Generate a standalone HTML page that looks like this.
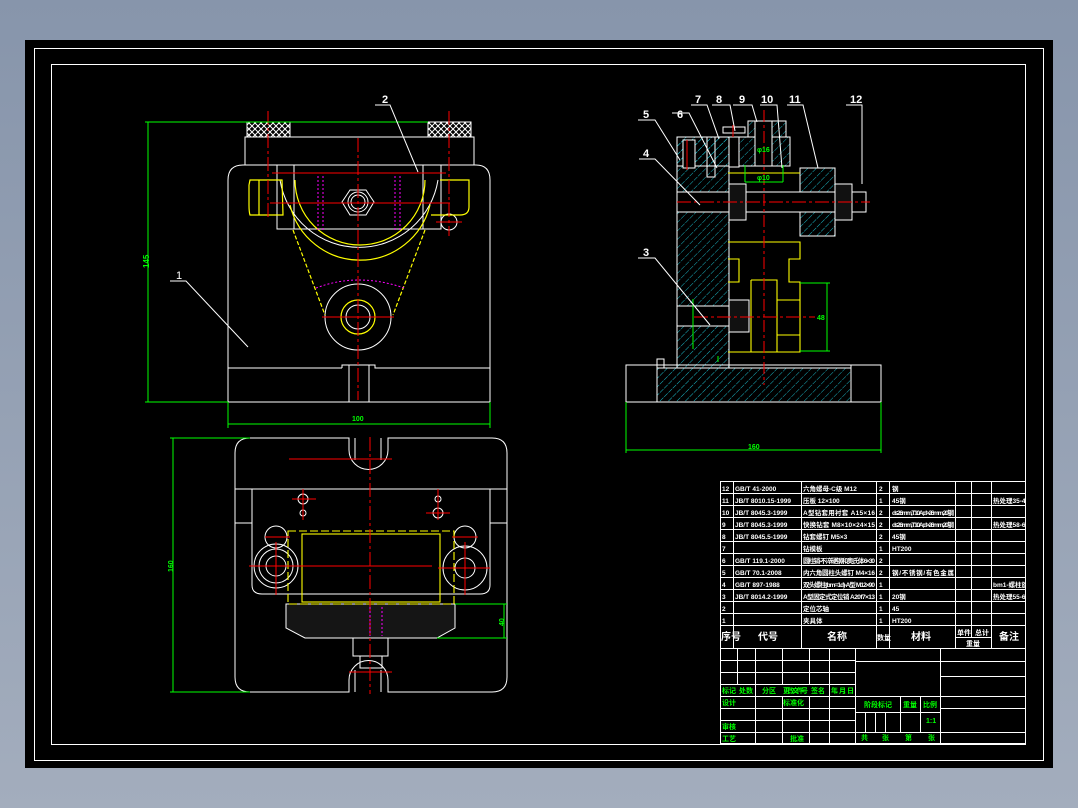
<!DOCTYPE html>
<html><head><meta charset="utf-8"><style>
html,body{margin:0;padding:0;}
body{width:1078px;height:808px;overflow:hidden;background:linear-gradient(180deg,#8795ab 0%,#a3adbd 100%);}
svg{position:absolute;left:0;top:0;}
text{font-family:"Liberation Sans","Noto Sans CJK SC",sans-serif;}
</style></head><body>
<svg width="1078" height="808" viewBox="0 0 1078 808" xmlns="http://www.w3.org/2000/svg">
<defs>
<pattern id="h" width="6" height="6" patternUnits="userSpaceOnUse" patternTransform="rotate(45)">
<line x1="0" y1="0" x2="0" y2="6" stroke="#1ec8d8" stroke-width="0.9" stroke-dasharray="3,1"/>
</pattern>
<pattern id="k" width="6" height="6" patternUnits="userSpaceOnUse">
<path d="M0 0 L6 6 M6 0 L0 6" stroke="#fff" stroke-width="1"/>
</pattern>
<clipPath id="tc"><rect x="720" y="481" width="305" height="145"/></clipPath>
</defs>
<rect x="25" y="40" width="1028" height="728" fill="#000"/>
<g fill="none" stroke="#fff" stroke-width="1">
<rect x="34.5" y="48.5" width="1009" height="712"/>
<rect x="51.5" y="64.5" width="974" height="680"/>
</g>

<!-- FRONT VIEW -->
<g fill="none" stroke="#fff" stroke-width="1">
<path d="M228 402 V180 Q228 165 243 165 H476 Q490 165 490 180 V402 Z"/>
<line x1="228" y1="368" x2="342" y2="368"/><path d="M342 368 V365 H375 V368 H490"/>
<path d="M349 365 V402 M369 365 V402"/>
<rect x="245" y="137" width="229" height="28"/>
<rect x="247" y="122" width="43" height="15" fill="url(#k)"/><rect x="428" y="122" width="43" height="15" fill="url(#k)"/>
<rect x="277" y="165" width="164" height="64"/>
<path d="M294 165 V229 M423 165 V229"/>
<polygon points="350,190 366,190 374,202 366,215 350,215 342,202"/>
<circle cx="358" cy="202" r="10"/><circle cx="358" cy="202" r="7"/>
<circle cx="358" cy="317" r="33"/><circle cx="358" cy="317" r="12"/>
<circle cx="449" cy="222" r="8"/>
<path d="M280 180 A80 80 0 0 0 438 180"/>
</g>
<g fill="none" stroke="#ff0" stroke-width="1.2">
<path d="M250 180 H282 L283 215 H250 Q249 212 249 205 V185 Z M259 180 V215"/>
<path d="M440 180 H469 V207 Q469 215 460 215 H431"/>
<path d="M295 180 A64 64 0 0 0 425 180"/>
<path d="M290 205 A72 72 0 0 0 430 205"/>
<path d="M293 230 L325 315 M425 230 L393 315" stroke-dasharray="4,2"/>
<circle cx="358" cy="317" r="17"/>
</g>
<path d="M316 288 Q358 272 404 288" fill="none" stroke="#f0f" stroke-dasharray="2,2"/>
<path d="M318 176 V230 M323 176 V230 M395 176 V230 M400 176 V230" stroke="#f0f" stroke-dasharray="2,2" fill="none"/>
<g stroke="#f00" stroke-width="1" fill="none">
<path d="M358 138 V400" stroke-dasharray="14,3,3,3"/>
<path d="M268 111 V220 M449 111 V236" stroke-dasharray="14,3,3,3"/>
<path d="M270 203 H450 M272 173 H446 M322 317 H394 M436 222 H462"/>
</g>
<g stroke="#0f0" fill="none">
<path d="M145 122 H428 M145 402 H228 M148 122 V402 M228 402 V428 M490 402 V428 M228 424 H490"/>
</g>
<text x="140" y="265" fill="#0f0" font-size="8" font-weight="bold" transform="rotate(-90 146 262)">145</text>
<text x="352" y="421" fill="#0f0" font-size="7" font-weight="bold">100</text>
<g stroke="#fff" fill="none"><path d="M375 105 H390 L418 172 M170 281 H186 L248 347"/></g>
<text x="382" y="103" fill="#fff" font-size="11" font-weight="bold">2</text>
<text x="176" y="279" fill="#fff" font-size="11">1</text>

<!-- BOTTOM VIEW -->
<g fill="none" stroke="#fff" stroke-width="1">
<path d="M250 438 H349 V450 A10 10 0 0 0 388 450 V438 H492 Q507 438 507 453 V677 Q507 692 492 692 H388 V680 A10 10 0 0 0 349 680 V692 H250 Q235 692 235 677 V453 Q235 438 250 438 Z"/>
<path d="M355 438 V460 M381 438 V460 M355 692 V670 M381 692 V670"/>
<path d="M235 489 H507 M252 489 V523 H235 M490 489 V523 H507"/>
<path d="M252 523 V585 Q252 594 262 594 H480 Q490 594 490 585 V523"/>
<circle cx="276" cy="566" r="22"/><circle cx="276" cy="566" r="17"/><circle cx="276" cy="566" r="10"/>
<circle cx="276" cy="537" r="11"/><circle cx="465" cy="537" r="11"/>
<circle cx="465" cy="568" r="22"/><circle cx="465" cy="568" r="10"/>
<circle cx="303" cy="499" r="5"/><circle cx="303" cy="513" r="3"/>
<circle cx="438" cy="499" r="3"/><circle cx="438" cy="513" r="5"/>
<path d="M286 604 H455 V628 L437 638 H305 L286 628 Z" fill="#151515"/>
<rect x="353" y="638" width="35" height="18"/>
<rect x="360" y="656" width="22" height="12"/>
</g>
<g fill="none" stroke="#ff0" stroke-width="1.1">
<rect x="288" y="531" width="166" height="73" stroke-dasharray="8,3"/>
<rect x="302" y="534" width="138" height="68"/>
</g>
<g stroke="#f00" fill="none">
<path d="M370 437 V694" stroke-dasharray="14,3,3,3"/>
<path d="M250 566 H432 M249 566 H305 M438 568 H490 M276 542 V595 M465 542 V595 M289 459 H392 M349 672 H392 M303 489 V520 M438 489 V520 M292 499 H316 M426 513 H450 M265 537 H290 M452 537 H478"/>
</g>
<path d="M370 607 V636 M382 607 V636" stroke="#f0f" stroke-dasharray="2,2"/>
<g stroke="#0f0" fill="none">
<path d="M170 438 H250 M170 692 H250 M173 438 V692 M455 604 H507 M437 638 H507 M504 604 V638"/>
</g>
<text x="165" y="570" fill="#0f0" font-size="7" font-weight="bold" transform="rotate(-90 170 567)">160</text>
<text x="495" y="625" fill="#0f0" font-size="7" font-weight="bold" transform="rotate(-90 500 621)">40</text>

<!-- SECTION VIEW -->
<g stroke="#fff" fill="url(#h)" stroke-width="1">
<path d="M677 137 H729 V368 H677 Z"/>
<path d="M657 368 H851 V402 H657 Z"/>
<rect x="677" y="137" width="113" height="29"/>
<rect x="748" y="121" width="38" height="16"/>
<rect x="800" y="168" width="35" height="68"/>
</g>
<g stroke="#fff" fill="none">
<path d="M657 368 V359 H664 V368"/>
<rect x="626" y="365" width="255" height="37"/>
<path d="M657 365 V402 M851 365 V402"/>
<rect x="677" y="192" width="189" height="20" fill="#000"/>
<rect x="729" y="184" width="17" height="36" fill="#111"/>
<rect x="835" y="184" width="17" height="36" fill="#111"/>
<rect x="683" y="140" width="12" height="28" fill="#000"/>
<rect x="707" y="137" width="8" height="40"/>
<rect x="729" y="137" width="10" height="30" fill="#000"/>
<rect x="755" y="121" width="17" height="45" fill="#000"/>
<path d="M723 127 H745 V133 H723 Z" fill="#000"/>
<rect x="677" y="306" width="52" height="20" fill="#000"/>
<rect x="729" y="300" width="20" height="32" fill="#111"/>
</g>
<g stroke="#ff0" fill="none" stroke-width="1.1">
<path d="M728 173 H800 M728 242 H800 V259 H789 V282 H800 V352 H728 M728 282 H739 V259 H728"/>
<path d="M751 280 H777 V352 M751 280 V352 M777 300 H800 M777 335 H800"/>
</g>
<g stroke="#f00" fill="none">
<path d="M764 110 V385" stroke-dasharray="12,3,3,3"/>
<path d="M677 202 H870 M694 317 H815" stroke-dasharray="14,3,3,3"/>
<path d="M733 125 V137 M687 140 V170"/>
</g>
<g stroke="#0f0" fill="none">
<path d="M626 402 V453 M881 402 V453 M626 450 H881 M800 283 H830 M800 351 H830 M827 283 V351 M745 165 V182 M783 165 V182 M745 182 H783 M693 299 V349 M718 356 V362"/>
</g>
<text x="748" y="449" fill="#0f0" font-size="7" font-weight="bold">160</text>
<text x="817" y="320" fill="#0f0" font-size="7" font-weight="bold">48</text>
<text x="757" y="152" fill="#0f0" font-size="7" font-weight="bold">φ16</text>
<text x="757" y="180" fill="#0f0" font-size="7" font-weight="bold">φ10</text>
<g stroke="#fff" fill="none">
<path d="M638 120 H655 L680 160 M672 113 H689 L717 168 M691 105 H707 L719 139 M712 105 H730 L735 131 M733 105 H752 L757 122 M639 159 H655 L700 205 M760 105 H777 L782 168 M787 105 H803 L818 168 M846 105 H862 V184 M638 258 H655 L710 325"/>
</g>
<g fill="#fff" font-size="11" font-weight="bold">
<text x="643" y="118">5</text><text x="677" y="118">6</text><text x="695" y="103">7</text><text x="716" y="103">8</text><text x="739" y="103">9</text><text x="761" y="103">10</text><text x="789" y="103">11</text><text x="850" y="103">12</text><text x="643" y="157">4</text><text x="643" y="256">3</text>
</g>

<!-- TABLE -->
<g stroke="#fff" fill="none" stroke-width="1">
<rect x="720.5" y="481.5" width="305" height="262"/>
<path d="M720 493.5 H1025 M720 505.5 H1025 M720 517.5 H1025 M720 529.5 H1025 M720 541.5 H1025 M720 553.5 H1025 M720 565.5 H1025 M720 577.5 H1025 M720 589.5 H1025 M720 601.5 H1025 M720 613.5 H1025 M720 625.5 H1025 M720 648.5 H1025"/>
<path d="M733.5 481 V648 M801.5 481 V648 M876.5 481 V648 M889.5 481 V648 M955.5 481 V648 M971.5 481 V637 M991.5 481 V648 M955 637.5 H991"/>
<path d="M720 660.5 H855 M720 672.5 H855 M720 684.5 H855 M720 696.5 H1025 M720 708.5 H855 M720 720.5 H855 M720 732.5 H1025 M855 661.5 H1025 M940 676.5 H1025 M855 712.5 H940 M940 708.5 H1025"/>
<path d="M737.5 648 V684 M755.5 648 V743 M782.5 648 V684 M809.5 648 V684 M829.5 648 V743 M855.5 648 V743 M940.5 648 V743 M782.5 696 V743 M809.5 696 V743 M900.5 696 V732 M920.5 696 V732 M865.5 712 V732 M875.5 712 V732 M885.5 712 V732"/>
</g>
<g fill="#fff" font-size="6.5" font-weight="bold" clip-path="url(#tc)">
<text x="722" y="491">12</text><text x="735" y="491">GB/T 41-2000</text><text x="803" y="491">六角螺母-C级 M12</text><text x="879" y="491">2</text><text x="892" y="491">钢</text>
<text x="722" y="503">11</text><text x="735" y="503">JB/T 8010.15-1999</text><text x="803" y="503">压板 12×100</text><text x="879" y="503">1</text><text x="892" y="503">45钢</text><text x="993" y="503">热处理35-40HRC</text>
<text x="722" y="515">10</text><text x="735" y="515">JB/T 8045.3-1999</text><text x="803" y="515" textLength="72">A型钻套用衬套 A15×16</text><text x="879" y="515">2</text><text x="892" y="515" textLength="62">d≤26mm,T10A;d&gt;26mm,20钢</text>
<text x="722" y="527">9</text><text x="735" y="527">JB/T 8045.3-1999</text><text x="803" y="527" textLength="72">快换钻套 M8×10×24×15</text><text x="879" y="527">2</text><text x="892" y="527" textLength="62">d≤26mm,T10A;d&gt;26mm,20钢</text><text x="993" y="527">热处理58-64HRC</text>
<text x="722" y="539">8</text><text x="735" y="539">JB/T 8045.5-1999</text><text x="803" y="539">钻套螺钉 M5×3</text><text x="879" y="539">2</text><text x="892" y="539">45钢</text>
<text x="722" y="551">7</text><text x="803" y="551">钻模板</text><text x="879" y="551">1</text><text x="892" y="551">HT200</text>
<text x="722" y="563">6</text><text x="735" y="563">GB/T 119.1-2000</text><text x="803" y="563" textLength="72">圆柱销-不淬硬钢和奥氏体 6×30</text><text x="879" y="563">2</text>
<text x="722" y="575">5</text><text x="735" y="575">GB/T 70.1-2008</text><text x="803" y="575" textLength="72">内六角圆柱头螺钉 M4×16</text><text x="879" y="575">2</text><text x="892" y="575" textLength="62">钢/不锈钢/有色金属</text>
<text x="722" y="587">4</text><text x="735" y="587">GB/T 897-1988</text><text x="803" y="587" textLength="72">双头螺柱(bm=1d)-A型 M12×90</text><text x="879" y="587">1</text><text x="993" y="587">bm1-螺柱旋入端</text>
<text x="722" y="599">3</text><text x="735" y="599">JB/T 8014.2-1999</text><text x="803" y="599" textLength="72">A型固定式定位销 A20f7×13</text><text x="879" y="599">1</text><text x="892" y="599">20钢</text><text x="993" y="599">热处理55-60HRC</text>
<text x="722" y="611">2</text><text x="803" y="611">定位芯轴</text><text x="879" y="611">1</text><text x="892" y="611">45</text>
<text x="722" y="623">1</text><text x="803" y="623">夹具体</text><text x="879" y="623">1</text><text x="892" y="623">HT200</text>
</g>
<g fill="#fff" font-size="10" font-weight="bold">
<text x="721" y="640">序号</text><text x="758" y="640">代号</text><text x="827" y="640">名称</text><text x="877" y="640" font-size="7">数量</text><text x="911" y="640">材料</text><text x="957" y="635" font-size="7">单件</text><text x="975" y="635" font-size="7">总计</text><text x="966" y="646" font-size="7">重量</text><text x="999" y="640">备注</text>
</g>
<g fill="#0f0" font-size="7" font-weight="bold">
<text x="722" y="693">标记</text><text x="739" y="693">处数</text><text x="762" y="693">分区</text><text x="783" y="693" textLength="25">更改文件号</text><text x="811" y="693">签名</text><text x="831" y="693" textLength="23">年、月、日</text>
<text x="722" y="705">设计</text><text x="783" y="705">标准化</text><text x="722" y="729">审核</text><text x="722" y="741">工艺</text><text x="790" y="741">批准</text>
<text x="864" y="707">阶段标记</text><text x="903" y="707">重量</text><text x="923" y="707">比例</text><text x="926" y="723">1:1</text>
<text x="861" y="740">共</text><text x="882" y="740">张</text><text x="905" y="740">第</text><text x="928" y="740">张</text>
</g>
</svg>
</body></html>
